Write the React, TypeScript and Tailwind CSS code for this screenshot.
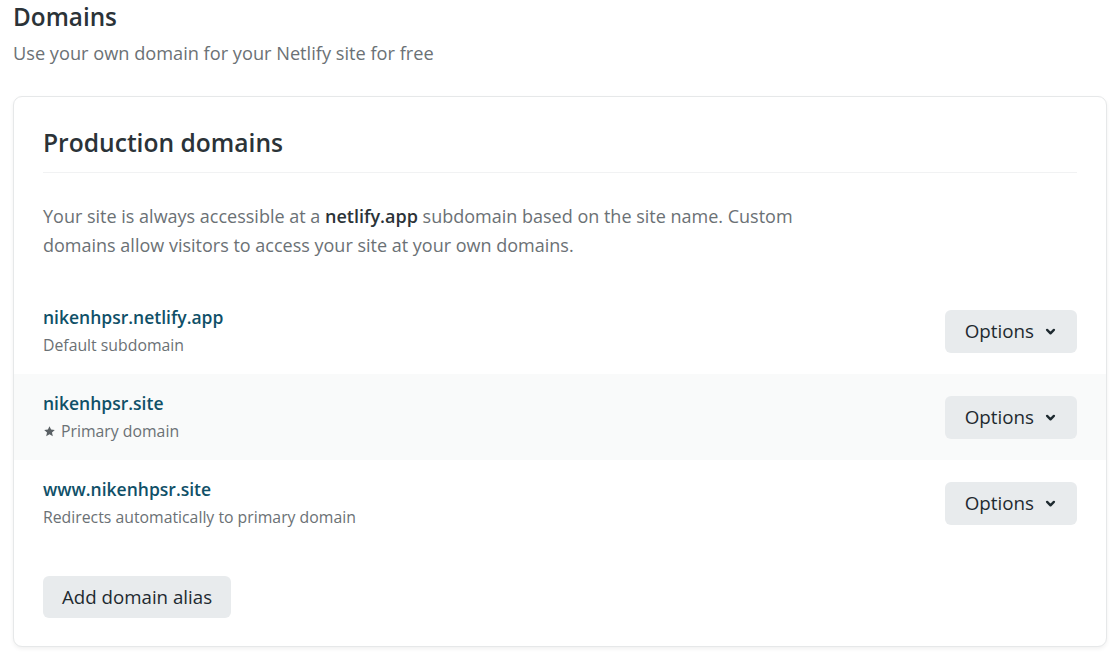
import React from 'react';

type Domain = {
  name: string;
  note: string;
  primary?: boolean;
};

const domains: Domain[] = [
  { name: 'nikenhpsr.netlify.app', note: 'Default subdomain' },
  { name: 'nikenhpsr.site', note: 'Primary domain', primary: true },
  { name: 'www.nikenhpsr.site', note: 'Redirects automatically to primary domain' },
];

const Chevron = () => (
  <svg viewBox="0 0 12 12" className="w-[11px] h-[11px]" fill="none" stroke="currentColor" strokeWidth="2.6" strokeLinecap="round" strokeLinejoin="round">
    <path d="M2.3 4.3 6 8l3.7-3.7" />
  </svg>
);

const Star = () => (
  <svg viewBox="0 0 24 24" className="w-[13px] h-[13px]" fill="currentColor">
    <path d="M12 2.2l2.9 6.3 6.9.7-5.2 4.6 1.5 6.8L12 17.1l-6.1 3.5 1.5-6.8-5.2-4.6 6.9-.7z" />
  </svg>
);

const OptionsButton = () => (
  <button className="flex items-center gap-[11px] h-[43px] pl-[20px] pr-[21px] rounded-md bg-[#e8ebed] text-[#1e2a30] text-[18.8px]">
    Options
    <Chevron />
  </button>
);

const App: React.FC = () => {
  return (
    <div className="bg-white min-h-[658px] pl-[13px] pr-[7px]" style={{ fontFamily: '"Open Sans", "Noto Sans", sans-serif' }}>
      <h1 className="text-[24.3px] leading-[34px] text-[#2b3338] font-semibold">Domains</h1>
      <p className="text-[18.2px] leading-[28px] text-[#6b7175] mt-[5px]">Use your own domain for your Netlify site for free</p>

      <div className="mt-[29px] border border-[#e6e8e9] rounded-[9px] shadow-[0_2px_4px_rgba(0,0,0,0.06)] bg-white">
        <div className="px-[29px] pt-[26px]">
          <h2 className="text-[24.6px] leading-[40px] text-[#2b3338] font-semibold">Production domains</h2>
          <div className="mt-[9px] border-t border-[#f1f2f3]" />
          <p className="mt-[29px] max-w-[790px] text-[18px] leading-[29px] text-[#6b7175]">
            Your site is always accessible at a <strong className="font-semibold text-[#2b3338]">netlify.app</strong> subdomain based on the site name. Custom domains allow visitors to access your site at your own domains.
          </p>
        </div>

        <div className="mt-[28px]">
          {domains.map((d, i) => (
            <div key={d.name} className={`flex items-center justify-between h-[86px] px-[29px] ${i === 1 ? 'bg-[#f9fafa]' : ''}`}>
              <div>
                <div className="text-[17.5px] leading-[28px] font-semibold text-[#0f5068]">{d.name}</div>
                <div className="flex items-center gap-[5px] text-[15.8px] leading-[29px] text-[#6b7175]">
                  {d.primary && <span className="text-[#5a6064]"><Star /></span>}
                  {d.note}
                </div>
              </div>
              <OptionsButton />
            </div>
          ))}
        </div>

        <div className="px-[29px] pt-[30px] pb-[28px]">
          <button className="h-[42px] px-[19px] rounded-md bg-[#e8ebed] text-[#1e2a30] text-[18.7px]">Add domain alias</button>
        </div>
      </div>
    </div>
  );
};

export default App;
